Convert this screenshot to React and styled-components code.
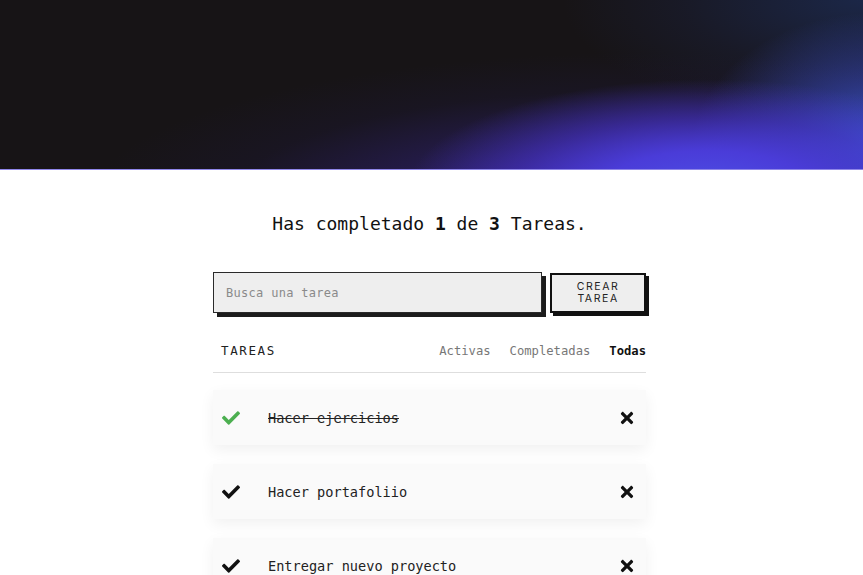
import React from 'react';
import styled, { createGlobalStyle } from 'styled-components';
import { FaCheck, FaTimes } from 'react-icons/fa';

const GlobalStyle = createGlobalStyle`
  body {
    margin: 0;
    background: #ffffff;
    font-family: 'DejaVu Sans Mono', 'Liberation Mono', monospace;
    color: #111;
  }
  * {
    box-sizing: border-box;
  }
`;

const todos = [
  { text: 'Hacer ejercicios', completed: true },
  { text: 'Hacer portafoliio', completed: false },
  { text: 'Entregar nuevo proyecto', completed: false },
];

const App = () => {
  const done = todos.filter((t) => t.completed).length;
  return (
    <>
      <GlobalStyle />
      <Hero />
      <Main>
        <Counter>
          Has completado <b>{done}</b> de <b>{todos.length}</b> Tareas.
        </Counter>
        <SearchRow>
          <SearchInput placeholder="Busca una tarea" />
          <CreateButton>
            CREAR
            <br />
            TAREA
          </CreateButton>
        </SearchRow>
        <FilterBar>
          <FilterTitle>TAREAS</FilterTitle>
          <Filters>
            <Filter>Activas</Filter>
            <Filter>Completadas</Filter>
            <Filter active>Todas</Filter>
          </Filters>
        </FilterBar>
        <List>
          {todos.map((todo) => (
            <Item key={todo.text}>
              <CheckIcon completed={todo.completed}>
                <FaCheck size={18} />
              </CheckIcon>
              <ItemText completed={todo.completed}>{todo.text}</ItemText>
              <DeleteIcon>
                <FaTimes size={18} />
              </DeleteIcon>
            </Item>
          ))}
        </List>
      </Main>
    </>
  );
};

export default App;

const Hero = styled.header`
  height: 170px;
  background:
    radial-gradient(ellipse 300px 110px at 82% 112%, #4d4ee6 0%, #4a3cd8 35%, rgba(70, 50, 200, 0.6) 65%, transparent 100%),
    radial-gradient(ellipse 190px 140px at 102% 90%, rgba(62, 95, 225, 0.95) 0%, rgba(60, 80, 210, 0.5) 50%, transparent 100%),
    radial-gradient(ellipse 560px 150px at 75% 120%, rgba(62, 42, 170, 0.9) 0%, rgba(45, 32, 110, 0.6) 45%, rgba(30, 24, 60, 0.3) 75%, transparent 100%),
    radial-gradient(ellipse 300px 120px at 100% 0%, rgba(28, 42, 80, 0.85) 0%, rgba(28, 36, 70, 0.35) 60%, transparent 100%),
    #171416;
  border-bottom: 1px solid #8f86e8;
`;

const Main = styled.main`
  width: 437px;
  margin: 0 auto;
  padding: 40px 4px 0 0;
`;

const Counter = styled.h1`
  margin: 0;
  font-size: 18px;
  font-weight: 400;
  text-align: center;
  line-height: 28px;

  b {
    font-weight: 700;
  }
`;

const SearchRow = styled.div`
  display: flex;
  gap: 8px;
  margin-top: 34px;
`;

const SearchInput = styled.input`
  width: 330px;
  height: 41px;
  padding: 0 12px;
  background: #eeeeee;
  border: 1.5px solid #2a2a2a;
  box-shadow: 4px 4px 0 #1c1c1c;
  font-family: 'DejaVu Sans Mono', 'Liberation Mono', monospace;
  font-size: 12px;
  letter-spacing: 0.3px;
  outline: none;

  &::placeholder {
    color: #8a8a8a;
  }
`;

const CreateButton = styled.button`
  width: 96px;
  height: 40px;
  margin-top: 1px;
  background: #eeeeee;
  border: 2px solid #111;
  box-shadow: 3px 3px 0 #111;
  font-family: 'Inter', 'Liberation Sans', sans-serif;
  font-size: 10.5px;
  letter-spacing: 1.6px;
  line-height: 12px;
  color: #222;
  cursor: pointer;
`;

const FilterBar = styled.div`
  display: flex;
  justify-content: space-between;
  align-items: center;
  margin-top: 30px;
  padding: 0 0 14px 8px;
  border-bottom: 1px solid #dedede;
`;

const FilterTitle = styled.span`
  font-size: 12.5px;
  letter-spacing: 1.6px;
  color: #222;
`;

const Filters = styled.div`
  display: flex;
  gap: 19px;
`;

const Filter = styled.span`
  font-size: 12.2px;
  color: ${({ active }) => (active ? '#111' : '#777')};
  font-weight: ${({ active }) => (active ? 700 : 400)};
  cursor: pointer;
`;

const List = styled.ul`
  list-style: none;
  margin: 17px 0 0;
  padding: 0;
  display: flex;
  flex-direction: column;
  gap: 19px;
`;

const Item = styled.li`
  display: flex;
  align-items: center;
  height: 55px;
  padding: 0 10px 0 9px;
  background: #fafafa;
  box-shadow: 0 5px 14px rgba(0, 0, 0, 0.06);
`;

const CheckIcon = styled.span`
  display: flex;
  width: 46px;
  color: ${({ completed }) => (completed ? '#4caf50' : '#111')};
`;

const ItemText = styled.p`
  flex: 1;
  margin: 0;
  font-size: 13.6px;
  color: #222;
  text-decoration: ${({ completed }) => (completed ? 'line-through' : 'none')};
`;

const DeleteIcon = styled.span`
  display: flex;
  color: #111;
  cursor: pointer;
`;
